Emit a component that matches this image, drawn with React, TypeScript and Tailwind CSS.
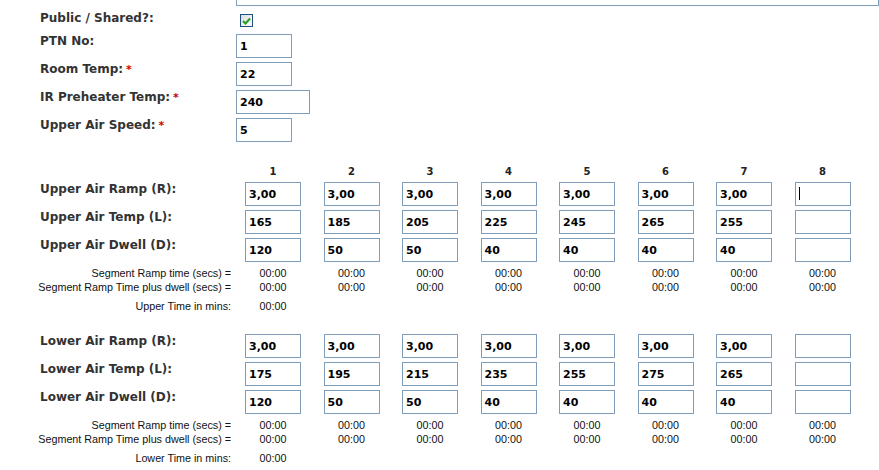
import React from "react";

const cols = [1, 2, 3, 4, 5, 6, 7, 8];

const upperRows = [
  { label: "Upper Air Ramp (R):", values: ["3,00", "3,00", "3,00", "3,00", "3,00", "3,00", "3,00", ""], caret: true },
  { label: "Upper Air Temp (L):", values: ["165", "185", "205", "225", "245", "265", "255", ""] },
  { label: "Upper Air Dwell (D):", values: ["120", "50", "50", "40", "40", "40", "40", ""] },
];

const lowerRows = [
  { label: "Lower Air Ramp (R):", values: ["3,00", "3,00", "3,00", "3,00", "3,00", "3,00", "3,00", ""] },
  { label: "Lower Air Temp (L):", values: ["175", "195", "215", "235", "255", "275", "265", ""] },
  { label: "Lower Air Dwell (D):", values: ["120", "50", "50", "40", "40", "40", "40", ""] },
];

const labelFont = "font-['DejaVu_Sans',Verdana,sans-serif] text-[12px] leading-[15px] font-bold text-[#333333]";
const smallFont = "font-['Liberation_Sans',Arial,sans-serif] text-[10.75px] leading-[14px] text-[#111111]";

// text box drawn as a div so the baseline can be placed exactly
function Field({ value, width = "w-[56px]", caret }: { value: string; width?: string; caret?: boolean }) {
  return (
    <div
      className={`relative ${width} h-[24px] border border-[#7f9db9] bg-white pl-[3px] overflow-hidden whitespace-nowrap font-['DejaVu_Sans',Verdana,sans-serif] text-[11px] leading-[23px] font-bold text-black`}
    >
      {value}
      {caret && <span className="absolute left-[3px] top-[4px] w-px h-[13px] bg-black" />}
    </div>
  );
}

function Required() {
  return <span className="ml-[3px] text-[#cc0000] text-[11px] align-top">*</span>;
}

function GridRow({ label, values, caret }: { label: string; values: string[]; caret?: boolean }) {
  return (
    <div className="flex h-[24px]">
      <div className={`w-[245px] pl-[40px] ${labelFont}`}>{label}</div>
      {values.map((v, i) => (
        <div key={i} className="w-[78.5px]">
          <Field value={v} caret={caret && i === 7} />
        </div>
      ))}
    </div>
  );
}

function TimeRow({ label, all = true }: { label: string; all?: boolean }) {
  return (
    <div className={`flex h-[14px] ${smallFont}`}>
      <div className="w-[245px] pr-[14px] text-right whitespace-nowrap">{label}</div>
      {cols.slice(0, all ? 8 : 1).map((c) => (
        <div key={c} className="w-[78.5px]">
          <div className="w-[56px] text-center">00:00</div>
        </div>
      ))}
    </div>
  );
}

function Section({ rows, name, header }: { rows: typeof upperRows; name: string; header?: boolean }) {
  return (
    <div className="flex flex-col">
      {header && (
        <div className="flex h-[12px] mb-[4px] font-['DejaVu_Sans',Verdana,sans-serif] text-[10px] leading-[12px] font-bold text-[#222222]">
          <div className="w-[245px]" />
          {cols.map((c) => (
            <div key={c} className="w-[78.5px]">
              <div className="w-[56px] text-center">{c}</div>
            </div>
          ))}
        </div>
      )}
      <div className="flex flex-col gap-[4px]">
        {rows.map((r) => (
          <GridRow key={r.label} label={r.label} values={r.values} caret={(r as any).caret} />
        ))}
      </div>
      <div className="mt-[4px]">
        <TimeRow label="Segment Ramp time (secs) =" />
        <TimeRow label="Segment Ramp Time plus dwell (secs) =" />
      </div>
      <div className="mt-[5px]">
        <TimeRow label={`${name} Time in mins:`} all={false} />
      </div>
    </div>
  );
}

export default function App() {
  return (
    <div className="w-[879px] h-[470px] overflow-hidden bg-white">
      {/* tail of the textarea above */}
      <div className="ml-[236px] mt-[-20px] w-[643px] h-[26px] border border-[#7f9db9]" />

      <div className="mt-[5px] flex flex-col">
        <div className="flex h-[23px]">
          <div className={`w-[236px] pl-[40px] ${labelFont}`}>Public / Shared?:</div>
          <div className="ml-[4px] mt-[3px] w-[13px] h-[13px] border border-[#1c5180] bg-gradient-to-br from-[#dcdcd7] to-white flex items-center justify-center">
            <svg width="9" height="8" viewBox="0 0 9 8">
              <path d="M1 4 L3.5 6.5 L8 1.5" fill="none" stroke="#21a121" strokeWidth="2" />
            </svg>
          </div>
        </div>

        <div className="flex flex-col gap-[4px]">
          <div className="flex h-[24px]">
            <div className={`w-[236px] pl-[40px] ${labelFont}`}>PTN No:</div>
            <Field value="1" />
          </div>
          <div className="flex h-[24px]">
            <div className={`w-[236px] pl-[40px] ${labelFont}`}>
              Room Temp:<Required />
            </div>
            <Field value="22" />
          </div>
          <div className="flex h-[24px]">
            <div className={`w-[236px] pl-[40px] ${labelFont}`}>
              IR Preheater Temp:<Required />
            </div>
            <Field value="240" width="w-[74px]" />
          </div>
          <div className="flex h-[24px]">
            <div className={`w-[236px] pl-[40px] ${labelFont}`}>
              Upper Air Speed:<Required />
            </div>
            <Field value="5" />
          </div>
        </div>

        <div className="mt-[24px]">
          <Section rows={upperRows} name="Upper" header />
        </div>
        <div className="mt-[21px]">
          <Section rows={lowerRows} name="Lower" />
        </div>
      </div>
    </div>
  );
}
